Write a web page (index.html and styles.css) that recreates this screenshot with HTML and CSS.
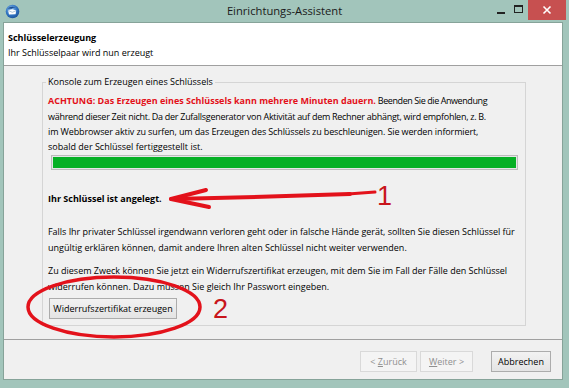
FILE: index.html
```html
<!DOCTYPE html>
<html lang="de">
<head>
<meta charset="utf-8">
<title>Einrichtungs-Assistent</title>
<link rel="stylesheet" href="styles.css">
</head>
<body>
<div class="window">
  <div class="titlebar">
    <div class="app-icon">
      <svg viewBox="0 0 15 15" width="15" height="15">
        <defs>
          <radialGradient id="tb" cx="40%" cy="35%" r="70%">
            <stop offset="0" stop-color="#8cc0ee"/>
            <stop offset="0.6" stop-color="#2f72c0"/>
            <stop offset="1" stop-color="#1a4f98"/>
          </radialGradient>
        </defs>
        <circle cx="7.5" cy="7.5" r="6.8" fill="url(#tb)"/>
        <path d="M3.2 6.4 L7.4 5.2 L11.2 6.6 L10.6 10.2 L4 10.4 Z" fill="#fff"/>
        <path d="M3.4 6.6 L7.3 8.3 L11 6.8" fill="none" stroke="#9bb4cf" stroke-width="0.8"/>
        <path d="M2.5 4.6 Q6 1.5 10.8 3.4 Q8 3.2 6.6 4.8 Z" fill="#1b4c8f"/>
      </svg>
    </div>
    <div class="title">Einrichtungs-Assistent</div>
    <div class="controls">
      <span class="ctl min"></span>
      <span class="ctl max"></span>
      <span class="ctl close">
        <svg viewBox="0 0 10 10" width="10" height="10"><path d="M1.5 1.5 L8.5 8.5 M8.5 1.5 L1.5 8.5" stroke="#fff" stroke-width="1.6"/></svg>
      </span>
    </div>
  </div>

  <div class="client">
    <div class="header">
      <div class="h-title">Schlüsselerzeugung</div>
      <div class="h-sub">Ihr Schlüsselpaar wird nun erzeugt</div>
    </div>

    <div class="page">
      <fieldset class="group">
        <legend>Konsole zum Erzeugen eines Schlüssels</legend>
        <p class="text"><span class="red">ACHTUNG: Das Erzeugen eines Schlüssels kann mehrere Minuten dauern.</span><span class="tight1"> Beenden Sie die Anwendung</span><br><span class="tight2">während dieser Zeit nicht. Da der Zufallsgenerator von Aktivität auf dem Rechner abhängt, wird empfohlen, z. B.</span><br><span class="tight3">im Webbrowser aktiv zu surfen, um das Erzeugen des Schlüssels zu beschleunigen. Sie werden informiert,</span><br>sobald der Schlüssel fertiggestellt ist.</p>
        <div class="progress"><div class="fill"></div></div>
        <p class="text done">Ihr Schlüssel ist angelegt.</p>
        <p class="text p1"><span class="tight4">Falls Ihr privater Schlüssel irgendwann verloren geht oder in falsche Hände gerät, sollten Sie diesen Schlüssel für</span><br>ungültig erklären können, damit andere Ihren alten Schlüssel nicht weiter verwenden.</p>
        <p class="text p2">Zu diesem Zweck können Sie jetzt ein Widerrufszertifikat erzeugen, mit dem Sie im Fall der Fälle den Schlüssel<br>widerrufen können. Dazu müssen Sie gleich Ihr Passwort eingeben.</p>
        <button class="btn btn-gen">Widerrufszertifikat erzeugen</button>
      </fieldset>
    </div>

    <div class="footer">
      <button class="btn btn-back" disabled>&lt; <u>Z</u>urück</button>
      <button class="btn btn-next" disabled><u>W</u>eiter &gt;</button>
      <button class="btn btn-cancel">Abbrechen</button>
    </div>
  </div>

  <svg class="annot" viewBox="0 0 569 388" width="569" height="388">
    <g fill="none" stroke="#e3121b" stroke-linecap="round" stroke-linejoin="round">
      <path d="M171 199 L206 190" stroke-width="4"/>
      <path d="M171 199 L209 207" stroke-width="4"/>
      <path d="M173 199 Q 260 197 350 194" stroke-width="4"/>
      <path d="M348 194 L375 192" stroke-width="3"/>
      <ellipse cx="114" cy="307" rx="86" ry="30" stroke-width="3.5"/>
    </g>
    <text class="num" x="377" y="205">1</text>
    <text class="num" x="213" y="318">2</text>
  </svg>
</div>
</body>
</html>
```

FILE: styles.css
```css
* { box-sizing: border-box; }

html, body {
  margin: 0;
  padding: 0;
}

body {
  width: 569px;
  height: 388px;
  overflow: hidden;
  background: #a2c5bb;
  font-family: "Open Sans", "Noto Sans", sans-serif;
  font-size: 9px;
  color: #000;
}

.window {
  position: relative;
  width: 569px;
  height: 388px;
  display: flex;
  flex-direction: column;
  background: #a2c5bb;
}

/* ---------- title bar ---------- */
.titlebar {
  height: 22px;
  flex: none;
  display: grid;
  grid-template-columns: 1fr auto 1fr;
  align-items: start;
}

.app-icon {
  padding: 4px 0 0 5px;
}

.app-icon svg { display: block; }

.title {
  font-size: 11.2px;
  line-height: 22px;
  color: #1a1a1a;
  white-space: nowrap;
}

.controls {
  display: flex;
  justify-content: flex-end;
  align-items: flex-start;
  padding-right: 3px;
}

.ctl { display: block; }

.ctl.min {
  width: 8px;
  height: 2px;
  background: #222;
  margin-top: 12px;
  margin-right: 9px;
}

.ctl.max {
  width: 9px;
  height: 8px;
  border: 1px solid #222;
  border-top-width: 2px;
  margin-top: 5px;
  margin-right: 5px;
}

.ctl.close {
  width: 38px;
  height: 20px;
  background: #c75050;
  display: flex;
  align-items: center;
  justify-content: center;
}

.ctl.close svg { display: block; }

/* ---------- client area ---------- */
.client {
  flex: 1;
  margin: 0 6px 8px 3px;
  border: 1px solid #86a399;
  background: #f0f0f0;
  display: flex;
  flex-direction: column;
}

.header {
  height: 43px;
  flex: none;
  background: #fff;
  border-bottom: 1px solid #a0a0a0;
  padding: 6.5px 4px 0;
  line-height: 15px;
  white-space: nowrap;
}

.h-title { font-weight: bold; }

.page {
  flex: 1;
  padding: 9px 36px 0 38px;
}

.group {
  margin: 0;
  min-width: 0;
  border: 1px solid #d5d5d5;
  padding: 4.3px 5px 6px 5px;
}

.group legend {
  padding: 0 2px;
  margin-left: -2px;
  line-height: 14px;
  font-size: 9px;
  white-space: nowrap;
}

.text {
  margin: 0;
  line-height: 15.33px;
  white-space: nowrap;
}

.red {
  color: #e3101a;
  font-weight: bold;
}

.tight1 { letter-spacing: -0.42px; }
.tight2 { letter-spacing: -0.28px; }
.tight3 { letter-spacing: -0.12px; }
.tight4 { letter-spacing: -0.03px; }

.progress {
  margin: 0 2px 0 3px;
  height: 15px;
  border: 1px solid #bcbcbc;
  background: #e6e6e6;
  padding: 1px;
}

.fill {
  height: 100%;
  background: #06b025;
}

.done {
  margin-top: 21.7px;
  font-weight: bold;
}

.p1 { margin-top: 17.6px; }
.p2 { margin-top: 8.3px; }

.btn {
  display: block;
  font-family: inherit;
  font-size: 9px;
  height: 21px;
  padding: 0;
  border: 1px solid #acacac;
  background: linear-gradient(#f2f2f2, #e4e4e4);
  color: #000;
  white-space: nowrap;
}

.btn:disabled {
  border-color: #d9d9d9;
  background: #f4f4f4;
  color: #8f8f8f;
}

.btn u { text-decoration: underline; }

.btn-gen {
  margin-top: 4px;
  margin-left: 1px;
  width: 128px;
}

.footer {
  height: 40px;
  flex: none;
  border-top: 1px solid #a0a0a0;
  display: flex;
  justify-content: flex-end;
  align-items: flex-start;
  padding: 11px 11px 0 0;
}

.btn-back { width: 57px; }
.btn-next { width: 53px; margin-left: 3px; }
.btn-cancel { width: 60px; margin-left: 18px; }

/* ---------- annotations drawn over the screenshot ---------- */
.annot {
  position: absolute;
  left: 0;
  top: 0;
  pointer-events: none;
}

.num {
  font-family: "Liberation Sans", Arial, sans-serif;
  font-size: 27px;
  fill: #c8151b;
}
```
